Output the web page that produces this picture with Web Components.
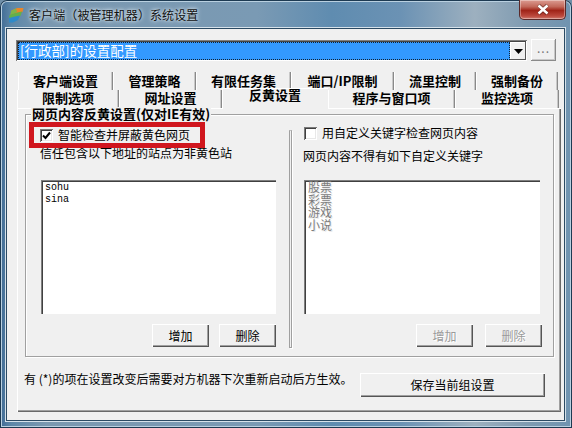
<!DOCTYPE html>
<html lang="zh-CN"><head><meta charset="utf-8">
<style>html,body{margin:0;padding:0;background:#6f8fa8}</style>
</head><body>
<app-window>
  <title-bar slot="title">客户端（被管理机器）系统设置</title-bar>
  <combo-row>[行政部]的设置配置</combo-row>
  <tab-strip>
    <tab-row style="--pl:1px;--lh:17px">
      <tab-item w="95">客户端设置</tab-item><tab-item w="83">管理策略</tab-item><tab-item w="95">有限任务集</tab-item><tab-item w="103">端口/IP限制</tab-item><tab-item w="82">流里控制</tab-item><tab-item w="82">强制备份</tab-item>
    </tab-row>
    <tab-row style="--pl:0px;--lh:15px">
      <tab-item w="102">限制选项</tab-item><tab-item w="103">网址设置</tab-item><tab-item w="106" active>反黄设置</tab-item><tab-item w="127">程序与窗口项</tab-item><tab-item w="104">监控选项</tab-item>
    </tab-row>
    <tab-panel>
      <group-box legend="网页内容反黄设置(仅对IE有效)">
        <filter-pane>
          <check-row slot="check" checked highlight>智能检查并屏蔽黄色网页</check-row>
          <span slot="desc">信任包含以下地址的站点为非黄色站</span>
          <list-box slot="list" latin>sohu<br>sina</list-box>
          <win-button slot="btn" w="57">增加</win-button>
          <win-button slot="btn" w="57">删除</win-button>
        </filter-pane>
        <v-rule></v-rule>
        <filter-pane side="right">
          <check-row slot="check">用自定义关键字检查网页内容</check-row>
          <span slot="desc">网页内容不得有如下自定义关键字</span>
          <list-box slot="list" disabled>股票<br>彩票<br>游戏<br>小说</list-box>
          <win-button slot="btn" w="57" disabled>增加</win-button>
          <win-button slot="btn" w="57" disabled>删除</win-button>
        </filter-pane>
      </group-box>
      <note-row>有 (*)的项在设置改变后需要对方机器下次重新启动后方生效。<win-button slot="action" w="185" h="24">保存当前组设置</win-button></note-row>
    </tab-panel>
  </tab-strip>
</app-window>
<script>
const FONT = '"Noto Sans CJK SC","Liberation Sans",sans-serif';
function def(name, css, html, after){
  customElements.define(name, class extends HTMLElement{
    constructor(){super();const s=this.attachShadow({mode:'open'});s.innerHTML='<style>'+css+'</style>'+html;}
    connectedCallback(){ if(after) after(this, this.shadowRoot); }
  });
}
def('app-window',`
:host{display:flex;flex-direction:column;width:572px;height:428px;box-sizing:border-box;font:12px/14px ${FONT};color:#000;
 border-radius:7px 7px 0 0;background:linear-gradient(90deg,#3f6a94 0,#5d87a8 2%,#7a98b0 8%,#7a9ab4 45%,#5f8cb0 58%,#6b92b4 70%,#9db0bf 83%,#7f9bb1 92%,#6f93b0 100%);
 box-shadow:inset 0 0 0 1px #1d3a52,inset 0 0 0 2px #b9d0e0;padding:0 8px 8px 7px}
.c{flex:1;display:flex;flex-direction:column;background:#f0f0f0;box-shadow:0 0 0 1px #2b4a63,0 0 0 2px #d6e2ea;padding:10px 4px 8px 9px;min-height:0}
`,`<slot name="title"></slot><div class="c"><slot></slot></div>`);

def('title-bar',`
:host{display:flex;align-items:center;height:29px;flex:none;margin:0 -1px 0 0;color:#111;text-shadow:0 0 5px #dce8f0,0 0 3px #dce8f0}
.ic{margin:0 5px 0 1px;flex:none}
.t{font-size:12px;letter-spacing:.1px;flex:1;white-space:nowrap;padding-top:1px}
.x{flex:none;width:47px;height:20px;margin:-9px -1px 0 0;box-sizing:border-box;display:flex;align-items:center;justify-content:center;border:1px solid #5a2a2a;border-top:0;border-radius:0 0 5px 5px;
 background:linear-gradient(#dc9c92 0,#c2685a 35%,#a02418 55%,#bd4a3e 85%,#cf7d70 100%);box-shadow:inset 0 0 0 1px rgba(255,255,255,.35)}
`,`<svg class="ic" width="16" height="16" viewBox="0 0 16 16"><path d="M3.5 3.5 L9 1 L15.5 1 L14.5 5 L8 7 L2.5 8Z" fill="#e8862a"/><path d="M3 4 L8 1.5 L9 5 L2.5 8Z" fill="#7fb54a"/><path d="M1.5 8 L7 6 L14 4.5 L12.5 9 L7 11 L1 12Z" fill="#63b04a"/><path d="M1 11 L7 9.5 L12 8.5 L10 13 L5 15.5 L1 15.5Z" fill="#2f8ac8"/></svg><div class="t"><slot></slot></div><div class="x"><svg width="14" height="11" viewBox="0 0 14 11"><path d="M2.5 1 L11.5 10 M11.5 1 L2.5 10" stroke="#3a1510" stroke-width="3.8" opacity=".5"/><path d="M2.5 1.5 L11.5 9.5 M11.5 1.5 L2.5 9.5" stroke="#fff" stroke-width="2.5"/></svg></div>`);

def('combo-row',`
:host{display:flex;flex:none;height:22px;gap:4px;margin:1px 0 0 0;padding-right:4px}
.box{flex:none;width:511px;height:21px;box-sizing:border-box;display:flex;background:#fff;box-shadow:inset 1px 1px #7f7f7f,inset -1px -1px #fff,inset 2px 2px #444;padding:2px 1px 1px 2px}
.sel{flex:1;background:#3399ff;color:#fff;outline:1px dotted #123;outline-offset:-1px;font-size:13.5px;line-height:17px;padding-left:2px;white-space:nowrap}
.arr{flex:none;width:16px;display:flex;align-items:center;justify-content:center;background:#f0f0f0;box-shadow:inset -1px -1px #555,inset 1px 1px #fff}
.dots{flex:none;width:25px;height:22px;margin-top:-1px;box-sizing:border-box;text-align:center;color:#777;line-height:18px;background:#f0f0f0;box-shadow:inset -1px -1px #8a8a8a,inset 1px 1px #fff,inset -2px -2px #c8c8c8;font-size:12px;letter-spacing:1px}
`,`<div class="box"><div class="sel"><slot></slot></div><div class="arr"><svg width="9" height="5"><path d="M0 0H9L4.5 5Z" fill="#000"/></svg></div></div><div class="dots">...</div>`);

def('tab-strip',`:host{display:flex;flex-direction:column;flex:1;min-height:0;margin:10px 0 0 1px;width:544px}`,`<slot></slot>`);
def('tab-row',`:host{display:flex;flex:none;height:18px;padding-left:var(--pl,0)}`,`<slot></slot>`);
def('tab-item',`
:host{display:block;flex:none;box-sizing:border-box;height:18px;text-align:center;font-weight:700;font-size:13px;line-height:var(--lh,17px);white-space:nowrap;background:#f0f0f0;
 box-shadow:inset 1px 0 #fff,inset -1px 0 #8a8a8a,inset -2px 0 #c8c8c8}
:host([active]){height:21px;margin-top:-2px;line-height:14px;position:relative;z-index:1;box-shadow:inset 1px 1px #fff}
`,`<slot></slot>`,(el)=>{el.style.width=el.getAttribute('w')+'px';});
def('tab-panel',`
:host{display:flex;flex-direction:column;flex:1;min-height:0;box-sizing:border-box;box-shadow:inset 1px 1px #fff,inset -1px -1px #696969,inset -2px -2px #a0a0a0;padding:6px 7px 0 8px;background:#f0f0f0}
`,`<slot></slot>`);
def('group-box',`
:host{display:flex;flex:none;height:243px;box-sizing:border-box;border:1px solid #a0a0a0;box-shadow:1px 1px #fff,inset 1px 1px #fff;position:relative;padding:13px 0 0 0}
.lg{position:absolute;left:5px;top:-8px;background:#f0f0f0;font-weight:700;font-size:13px;line-height:14px;padding:0 1px;white-space:nowrap}
`,`<div class="lg"></div><slot></slot>`,(el,s)=>{s.querySelector('.lg').textContent=el.getAttribute('legend');});
def('filter-pane',`
:host{display:flex;flex-direction:column;flex:none;width:263px;box-sizing:border-box;padding:0 0 0 14px}
:host([side="right"]){padding-left:12px;width:252px}
.d{margin:4px 0 0 0;height:14px;line-height:14px;white-space:nowrap}
.l{margin:20px 0 0 1px}
.b{display:flex;justify-content:flex-end;gap:10px;margin:10px 0 0 0;width:236px}
:host([side="right"]) .ck{margin-top:-2px}
:host([side="right"]) .d{margin:9px 0 0 -1px}
:host([side="right"]) .l{margin:17px 0 0 0}
:host([side="right"]) .b{width:238px;gap:12px}
`,`<div class="ck"><slot name="check"></slot></div><div class="d"><slot name="desc"></slot></div><div class="l"><slot name="list"></slot></div><div class="b"><slot name="btn"></slot></div>`);
def('v-rule',`:host{display:block;flex:none;width:3px;height:218px;margin-top:2px;box-sizing:border-box;border:1px solid #a0a0a0;border-top-color:#c0c0c0;background:#f0f0f0;box-shadow:1px 1px #fff}`,``);
def('check-row',`
:host{display:flex;align-items:center;gap:5px;height:14px;white-space:nowrap;position:relative}
.b{flex:none;width:13px;height:13px;box-sizing:border-box;background:#fff;box-shadow:inset 1px 1px #7a7a7a,inset -1px -1px #fff,inset 2px 2px #404040,inset -2px -2px #e8e8e8;display:flex;align-items:center;justify-content:center}
.hl{position:absolute;left:-11px;top:-6px;width:176px;height:26px;box-sizing:border-box;border:5px solid #d0161e;pointer-events:none}
`,`<div class="b"></div><span><slot></slot></span>`,(el,s)=>{
  if(el.hasAttribute('checked')) s.querySelector('.b').innerHTML='<svg width="9" height="9" viewBox="0 0 9 9"><path d="M1 4.5 L3.5 7 L8 1.5" fill="none" stroke="#000" stroke-width="2"/></svg>';
  if(el.hasAttribute('highlight')){const d=document.createElement('div');d.className='hl';s.appendChild(d);}
});
def('list-box',`
:host{display:block;flex:none;width:235px;height:134px;box-sizing:border-box;background:#fff;box-shadow:inset 1px 1px #7f7f7f,inset 2px 2px #404040,inset -1px -1px #fff;padding:2px 4px;line-height:12px;font-size:12px}
:host([latin]){font-family:"Liberation Mono",monospace;font-size:10px}
:host([disabled]){width:236px;color:#7c7c7c;text-shadow:1px 1px #e8e8e8;line-height:12.5px;padding-top:1px}
`,`<slot></slot>`);
def('win-button',`
:host{display:flex;align-items:center;justify-content:center;flex:none;box-sizing:border-box;height:23px;background:#f0f0f0;box-shadow:inset 1px 1px #fff,inset -1px -1px #555,inset -2px -2px #a0a0a0;font-size:12px;white-space:nowrap}
:host([disabled]){color:#9a9a9a;text-shadow:1px 1px #fff}
`,`<slot></slot>`,(el)=>{el.style.width=el.getAttribute('w')+'px';if(el.getAttribute('h'))el.style.height=el.getAttribute('h')+'px';});
def('note-row',`
:host{display:flex;flex:none;margin:16px 0 0 -1px;align-items:flex-start;white-space:nowrap}
.t{flex:none;width:336px;margin-top:-1px}
`,`<div class="t"><slot></slot></div><slot name="action"></slot>`);
</script>
</body></html>
